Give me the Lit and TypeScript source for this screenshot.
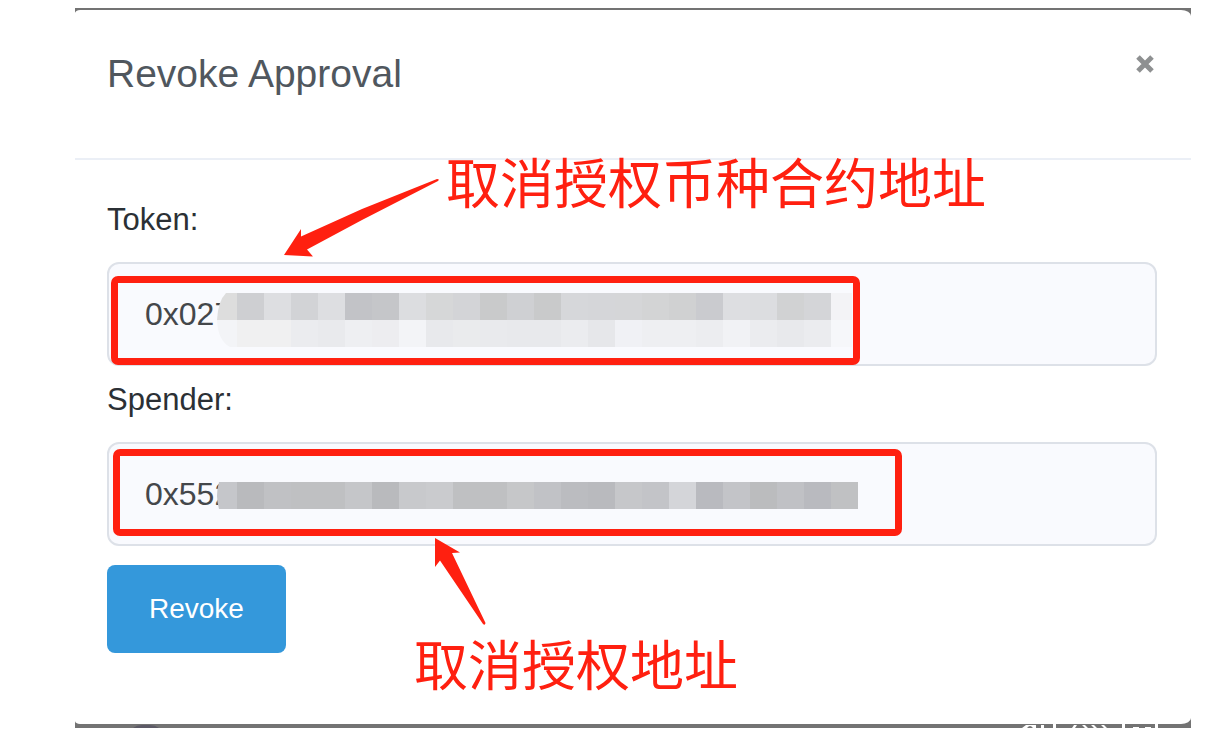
import { LitElement, html, svg, css } from "lit";
import { customElement, property } from "lit/decorators.js";

const CELL = 27;

const TOKEN_MASK = [
  "dddddd cecfd2 dddee1 d2d3d6 dddee1 c2c3c7 c5c6c9 dcdde0 d6d7d8 d3d4d7 c9cacb cfd0d3 c9cacb d6d7da d5d6d9 d5d6d8 d3d4d5 d0d1d2 cacbcf dddee1 dcdde0 d1d2d3 d4d5d8 f3f3f6".split(" "),
  "f3f4f7 f0f0f1 f0f0f1 ebecef e9eaed eeeff2 ededf0 f3f4f7 e8e9ec eaebed e9eaed e8e9ec e8e9ec ebecef e6e7ea f0f1f5 eeeff2 eeeff2 ecedf0 f1f2f5 ebecef e8e9ec ebecef f6f7fa".split(" "),
];

const SPENDER_MASK = [
  "c5c6ca b9babd c0c1c4 bfc0c2 bfc0c2 c5c6c9 b9babd c8c9cc cacbce bfc0c2 bfc0c2 c6c7c9 c1c2c6 bbbcc0 b9babe c6c7ca c3c4c8 d4d5d9 b9babf c3c4c8 bbbcbe c0c1c5 b9babf c0c1c3".split(" "),
];

/** Read-only address box whose tail is hidden by a mosaic and framed in red. */
@customElement("address-field")
export class AddressField extends LitElement {
  @property() name = "";
  @property() label = "";
  @property() value = "";
  @property({ attribute: false }) mask: string[][] = [];

  static styles = css`
    :host {
      display: block;
      font-family: "Liberation Sans", Arial, sans-serif;
    }
    .label {
      display: block;
      margin-bottom: 19px;
      font-size: 31px;
      line-height: 46px;
      color: #2b3035;
    }
    .box {
      position: relative;
      display: flex;
    }
    .input {
      box-sizing: border-box;
      flex: 1;
      min-width: 0;
      height: 104px;
      padding: 0 36px;
      border: 2px solid #dde1e8;
      border-radius: 12px;
      background: #f9fafe;
      color: #44474b;
      font: inherit;
      font-size: 32px;
      outline: none;
    }
    .mask,
    .frame {
      position: absolute;
      pointer-events: none;
    }
    .mask {
      left: 103px;
    }
    .mask.token {
      top: 31px;
    }
    .mask.spender {
      top: 40px;
    }
    .frame {
      box-sizing: border-box;
      border: 7px solid #ff2010;
      border-radius: 7px;
    }
    .frame.token {
      left: 4px;
      top: 14px;
      width: 749px;
      height: 89px;
    }
    .frame.spender {
      left: 6px;
      top: 7px;
      width: 789px;
      height: 87px;
    }
  `;

  render() {
    const width = CELL * 24;
    const height = CELL * this.mask.length;
    const shape =
      this.mask.length > 1
        ? `M16 0H642V54H20Q8 48 7 27Q8 8 16 0Z`
        : `M9 0H648V27H9Q5 14 9 0Z`;
    return html`
      <label class="label" for="address">${this.label}</label>
      <div class="box">
        <input class="input" id="address" type="text" readonly .value=${this.value} />
        <svg class="mask ${this.name}" width=${width} height=${height} shape-rendering="crispEdges" aria-hidden="true">
          <defs><clipPath id="edge"><path d=${shape} /></clipPath></defs>
          <g clip-path="url(#edge)">
            ${this.mask.map((row, y) =>
              row.map(
                (c, x) => svg`<rect x=${x * CELL} y=${y * CELL} width=${CELL} height=${CELL} fill=${"#" + c} />`
              )
            )}
          </g>
        </svg>
        <div class="frame ${this.name}"></div>
      </div>
    `;
  }
}

@customElement("app-root")
export class AppRoot extends LitElement {
  static styles = css`
    :host {
      display: block;
      box-sizing: border-box;
      padding: 8px 38px 25px 75px;
      background: #fff;
      font-family: "Liberation Sans", Arial, sans-serif;
    }
    .backdrop {
      position: relative;
      padding: 2px 0 4px;
      background: #737373;
      overflow: hidden;
    }
    .modal {
      position: relative;
      border-radius: 5px 10px 10px 5px / 3px 6px 6px 3px;
      background: #fff;
    }
    .header {
      display: flex;
      justify-content: space-between;
      align-items: flex-start;
      padding: 34px 34px 54px 32px;
      border-bottom: 2px solid #ebeff6;
    }
    .title {
      margin: 0;
      font-size: 39px;
      font-weight: 400;
      line-height: 60px;
      color: #50575e;
    }
    .close {
      display: flex;
      margin: 8px 0 0;
      padding: 2px;
      border: 0;
      background: none;
      cursor: pointer;
    }
    .form {
      display: flex;
      flex-direction: column;
      align-items: stretch;
      gap: 11px;
      padding: 37px 34px 71px 32px;
    }
    .revoke {
      align-self: flex-start;
      margin-top: 8px;
      height: 88px;
      padding: 0 42px;
      border: 0;
      border-radius: 8px;
      background: #3498db;
      color: #fff;
      font: inherit;
      font-size: 28px;
      cursor: pointer;
    }
    .note {
      position: absolute;
      margin: 0;
      font-family: "Noto Sans CJK SC", sans-serif;
      font-size: 54px;
      line-height: 60px;
      white-space: nowrap;
      color: #ff2010;
    }
    .note-token {
      left: 371px;
      top: 141px;
    }
    .note-spender {
      left: 339px;
      top: 623px;
    }
    .arrow {
      position: absolute;
      fill: #ff2010;
    }
    .arrow-token {
      left: 209px;
      top: 168px;
    }
    .arrow-spender {
      left: 360px;
      top: 528px;
    }
    .peek {
      position: absolute;
      bottom: 0;
    }
    .peek-dot {
      left: 58px;
    }
    .peek-mark {
      right: 28px;
    }
  `;

  render() {
    return html`
      <main class="backdrop">
        <section class="modal" role="dialog" aria-labelledby="title">
          <header class="header">
            <h1 class="title" id="title">Revoke Approval</h1>
            <button class="close" type="button" aria-label="Close">
              <svg width="20" height="20" viewBox="0 0 20 20" aria-hidden="true">
                <path d="M3 3L17 17M17 3L3 17" stroke="#8e9091" stroke-width="5" />
              </svg>
            </button>
          </header>
          <form class="form" @submit=${(e: Event) => e.preventDefault()}>
            <address-field name="token" label="Token:" value="0x027" .mask=${TOKEN_MASK}></address-field>
            <address-field name="spender" label="Spender:" value="0x552" .mask=${SPENDER_MASK}></address-field>
            <button class="revoke" type="submit">Revoke</button>
          </form>
          <p class="note note-token">取消授权币种合约地址</p>
          <svg class="arrow arrow-token" width="156" height="80" aria-hidden="true">
            <path d="M0 77L17 51L17 58.500L78 31L153 1Q156 1 154 3L78 42L23 71.500L29 78.500Z" />
          </svg>
          <p class="note note-spender">取消授权地址</p>
          <svg class="arrow arrow-spender" width="54" height="90" aria-hidden="true">
            <path d="M0 0L25 14.500L17 15L50.500 85Q50 88 48 86L5 22.500L0 29Z" />
          </svg>
        </section>
        <svg class="peek peek-dot" width="26" height="3" aria-hidden="true">
          <path d="M0 3Q4 0 9 0H17Q22 0 26 3Z" fill="#5c5a66" />
        </svg>
        <svg class="peek peek-mark" width="142" height="4" aria-hidden="true">
          <path
            d="M1 4L5 1H15V4H12Q9 0 6 4ZM20 1H23V4H20ZM32 0H35V4H32ZM53 1H56L54 4H51ZM61 1H64L67 4H64ZM70 1H73L76 4H73ZM80 1H83L86 4H83ZM101 0H104V4H101ZM112 3H118V4H112ZM124 3H130V4H124ZM134 0H137V4H134Z"
            fill="#fff"
          />
        </svg>
      </main>
    `;
  }
}
